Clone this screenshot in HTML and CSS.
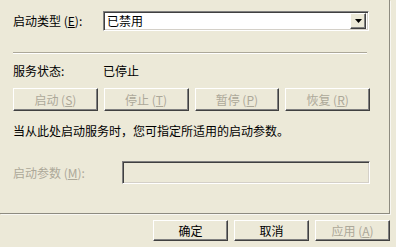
FILE: index.html
```html
<!DOCTYPE html>
<html lang="zh-CN">
<head>
<meta charset="utf-8">
<title>服务属性</title>
<link rel="stylesheet" href="styles.css">
</head>
<body>
<div class="dialog">
  <div class="panel">
    <div class="row-type">
      <span class="label">启动类型 (<u>E</u>):</span>
      <div class="combo">
        <span class="combo-text">已禁用</span>
        <span class="combo-btn"><svg width="7" height="4" viewBox="0 0 7 4"><path d="M0 0H7L3.5 4Z" fill="#000"/></svg></span>
      </div>
    </div>
    <div class="sep"></div>
    <div class="row-status">
      <span class="label">服务状态:</span>
      <span>已停止</span>
    </div>
    <div class="svc-buttons">
      <button class="btn" disabled>启动 (<u>S</u>)</button>
      <button class="btn" disabled>停止 (<u>T</u>)</button>
      <button class="btn" disabled>暂停 (<u>P</u>)</button>
      <button class="btn" disabled>恢复 (<u>R</u>)</button>
    </div>
    <p class="desc">当从此处启动服务时，您可指定所适用的启动参数。</p>
    <div class="row-param">
      <span class="label-param">启动参数 (<u>M</u>):</span>
      <div class="textbox"></div>
    </div>
  </div>
  <div class="footer">
    <button class="btn btn-foot">确定</button>
    <button class="btn btn-foot">取消</button>
    <button class="btn btn-foot" disabled>应用 (<u>A</u>)</button>
  </div>
</div>
</body>
</html>
```
FILE: styles.css
```css
html, body {
  margin: 0;
  padding: 0;
  background: #ece9d8;
}
body {
  width: 396px;
  height: 247px;
  overflow: hidden;
  font-family: "Noto Sans CJK SC", "Noto Sans", sans-serif;
  font-size: 12px;
  color: #000;
}
u { text-decoration: underline; text-underline-offset: 1px; }
.dialog { display: flex; flex-direction: column; }
.panel {
  width: 376px;
  height: 213px;
  padding-left: 13px;
  border-right: 1px solid #8d8b80;
  border-bottom: 1px solid #8d8b80;
  box-shadow: 1px 1px 0 #f8f7f2;
  display: flex;
  flex-direction: column;
}
.row-type {
  display: flex;
  align-items: center;
  margin-top: 11px;
  height: 20px;
}
.label { width: 90px; line-height: 16px; }
.combo {
  width: 264px;
  height: 18px;
  background: #fff;
  border-top: 1px solid #808080;
  border-left: 1px solid #808080;
  border-right: 1px solid #fff;
  border-bottom: 1px solid #fff;
  box-shadow: inset 1px 1px 0 #404040, inset -1px -1px 0 #d4d0c8;
  display: flex;
  align-items: center;
  justify-content: space-between;
}
.combo-text { padding-left: 3px; line-height: 16px; }
.combo-btn {
  width: 14px;
  height: 14px;
  margin-right: 2px;
  background: #ece9d8;
  border-top: 1px solid #fff;
  border-left: 1px solid #fff;
  border-right: 1px solid #404040;
  border-bottom: 1px solid #404040;
  box-shadow: inset -1px -1px 0 #808080;
  display: flex;
  align-items: center;
  justify-content: center;
}
.sep {
  margin-top: 21px;
  width: 354px;
  height: 1px;
  background: #aca899;
  border-bottom: 1px solid #fff;
}
.row-status {
  display: flex;
  align-items: center;
  margin-top: 9px;
  height: 16px;
  line-height: 16px;
}
.svc-buttons {
  display: flex;
  gap: 6px;
  margin-top: 9px;
  width: 357px;
  height: 23px;
}
.btn {
  font-family: inherit;
  font-size: 12px;
  line-height: 16px;
  padding: 0;
  color: #000;
  background: #ece9d8;
  border-top: 1px solid #fff;
  border-left: 1px solid #fff;
  border-right: 1px solid #404040;
  border-bottom: 1px solid #404040;
  box-shadow: inset -1px -1px 0 #808080;
  box-sizing: border-box;
}
.btn:disabled { color: #aca899; }
.svc-buttons .btn { flex: 1; height: 23px; }
.desc {
  margin: 12px 0 0;
  line-height: 16px;
  height: 16px;
  white-space: nowrap;
}
.row-param {
  display: flex;
  align-items: center;
  margin-top: 22px;
  height: 23px;
}
.label-param { width: 109px; color: #aca899; line-height: 16px; }
.textbox {
  background: #ece9d8;
  border-top: 1px solid #808080;
  border-left: 1px solid #808080;
  border-right: 1px solid #fff;
  border-bottom: 1px solid #fff;
  box-shadow: inset 1px 1px 0 #404040, inset -1px -1px 0 #d4d0c8;
  box-sizing: border-box;
  width: 248px;
  height: 23px;
}
.footer {
  display: flex;
  justify-content: flex-end;
  gap: 6px;
  margin-top: 6px;
  padding-right: 6px;
}
.btn-foot { width: 75px; height: 21px; }
```
